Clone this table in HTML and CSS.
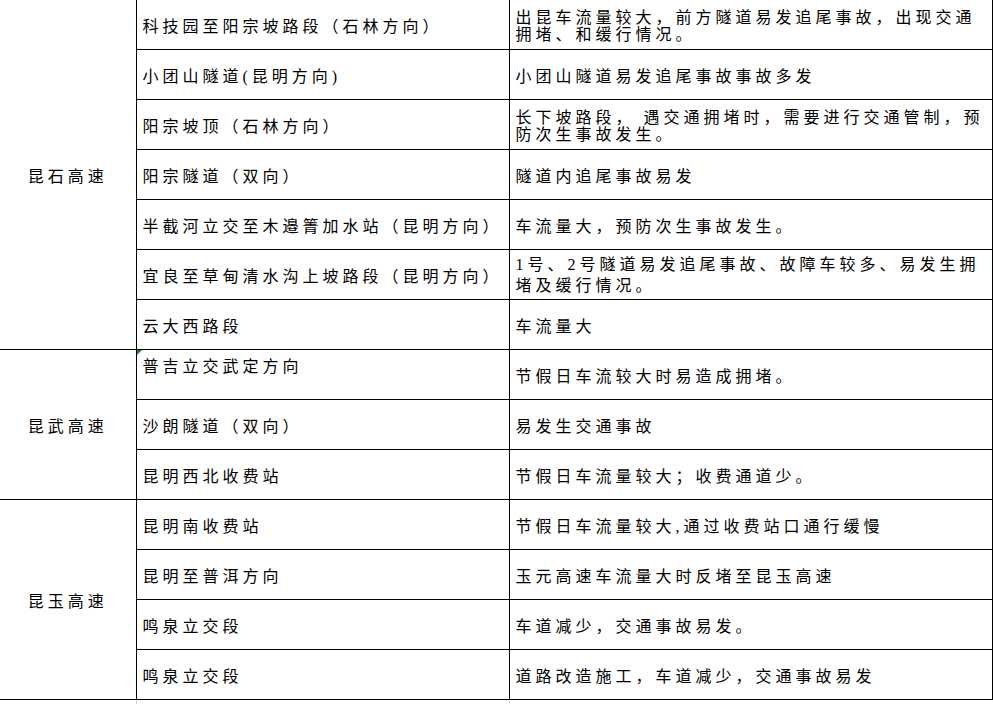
FILE: index.html
```html
<!DOCTYPE html>
<html lang="zh-CN">
<head>
<meta charset="utf-8">
<title>路段</title>
<link rel="stylesheet" href="styles.css">
</head>
<body>
<table class="grid">
  <colgroup>
    <col class="c1"><col class="c2"><col class="c3">
  </colgroup>
  <tbody>
    <tr>
      <td class="road" rowspan="7">昆石高速</td>
      <td>科技园至阳宗坡路段（石林方向）</td>
      <td>出昆车流量较大，前方隧道易发追尾事故，出现交通<br>拥堵、和缓行情况。</td>
    </tr>
    <tr>
      <td>小团山隧道(昆明方向)</td>
      <td>小团山隧道易发追尾事故事故多发</td>
    </tr>
    <tr>
      <td>阳宗坡顶（石林方向）</td>
      <td>长下坡路段， 遇交通拥堵时，需要进行交通管制，预<br>防次生事故发生。</td>
    </tr>
    <tr>
      <td>阳宗隧道（双向）</td>
      <td>隧道内追尾事故易发</td>
    </tr>
    <tr>
      <td>半截河立交至木邉箐加水站（昆明方向）</td>
      <td>车流量大，预防次生事故发生。</td>
    </tr>
    <tr>
      <td>宜良至草甸清水沟上坡路段（昆明方向）</td>
      <td class="tall">1号、2号隧道易发追尾事故、故障车较多、易发生拥<br>堵及缓行情况。</td>
    </tr>
    <tr>
      <td>云大西路段</td>
      <td>车流量大</td>
    </tr>
    <tr>
      <td class="road" rowspan="3">昆武高速</td>
      <td class="top flagged">普吉立交武定方向</td>
      <td>节假日车流较大时易造成拥堵。</td>
    </tr>
    <tr>
      <td>沙朗隧道（双向）</td>
      <td>易发生交通事故</td>
    </tr>
    <tr>
      <td>昆明西北收费站</td>
      <td>节假日车流量较大；收费通道少。</td>
    </tr>
    <tr>
      <td class="road" rowspan="4">昆玉高速</td>
      <td>昆明南收费站</td>
      <td>节假日车流量较大,通过收费站口通行缓慢</td>
    </tr>
    <tr>
      <td>昆明至普洱方向</td>
      <td>玉元高速车流量大时反堵至昆玉高速</td>
    </tr>
    <tr>
      <td>鸣泉立交段</td>
      <td>车道减少，交通事故易发。</td>
    </tr>
    <tr>
      <td>鸣泉立交段</td>
      <td>道路改造施工，车道减少，交通事故易发</td>
    </tr>
    <tr class="tail">
      <td></td><td></td><td></td>
    </tr>
  </tbody>
</table>
</body>
</html>
```
FILE: styles.css
```css
html, body {
  margin: 0;
  padding: 0;
  background: #ffffff;
  overflow: hidden;
}

body {
  font-family: "Liberation Serif", "Noto Sans CJK SC", serif;
  font-size: 16px;
  color: #000000;
}

.grid {
  border-collapse: collapse;
  table-layout: fixed;
  width: 992px;
  margin-top: -1px;
}

.c1 { width: 136px; }
.c2 { width: 373px; }
.c3 { width: 483px; }

.grid td {
  box-sizing: border-box;
  border: 1px solid #000000;
  height: 50px;
  padding: 3px 0 0 6px;
  vertical-align: middle;
  letter-spacing: 4px;
  line-height: 17px;
  white-space: nowrap;
  overflow: hidden;
}

.grid td.road {
  border-left: none;
  text-align: center;
  padding: 3px 0 0 0;
}

.grid td.tall {
  line-height: 21px;
  padding-top: 1px;
}

.grid td.top {
  vertical-align: top;
  padding-top: 8px;
}

.flagged {
  position: relative;
}

.flagged::before {
  content: "";
  position: absolute;
  left: 0;
  top: 0;
  width: 0;
  height: 0;
  border-top: 5px solid #1e8a1e;
  border-right: 5px solid transparent;
}

.grid tr.tail td {
  height: 6px;
  border-top: 1px solid #000000;
  border-bottom: none;
  border-right: none;
  border-left: 1px solid #cfd3e6;
  padding: 0;
}

.grid tr.tail td:first-child {
  border-left: none;
}
```
